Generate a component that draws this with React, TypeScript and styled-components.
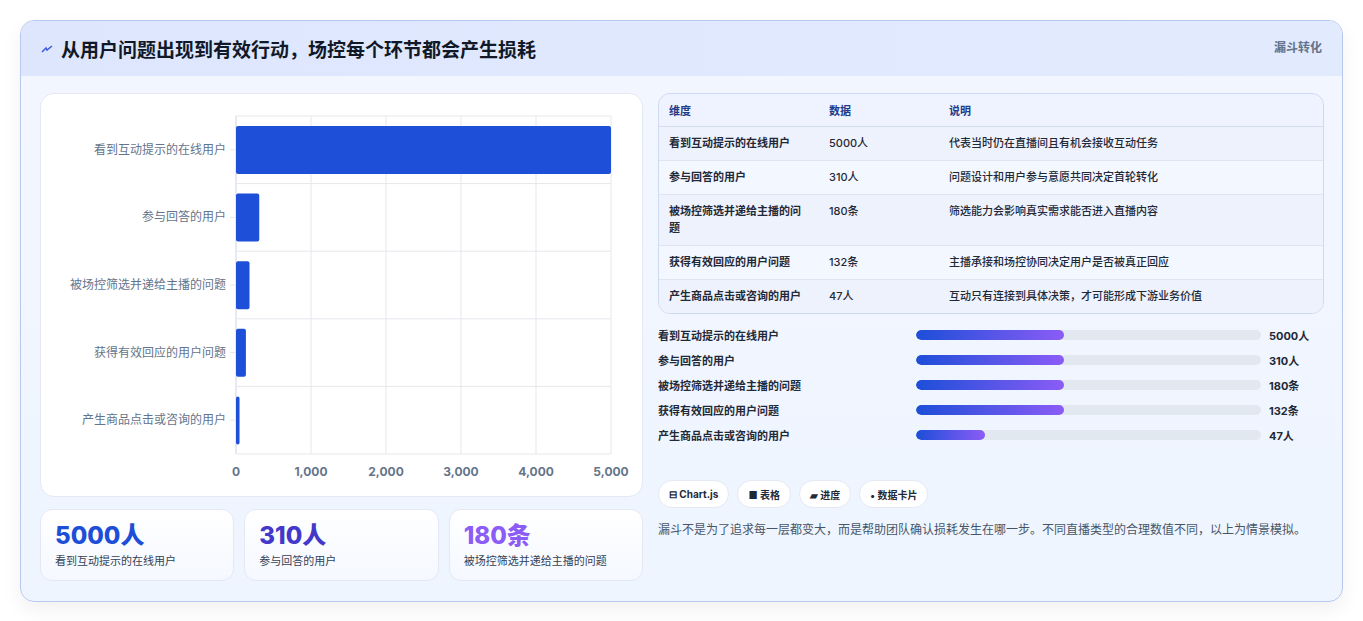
import React from 'react';
import styled, { createGlobalStyle } from 'styled-components';

const Global = createGlobalStyle`
  body { margin: 0; background: #fff; font-family: Inter, "Noto Sans CJK SC", sans-serif; }
`;

const rows = [
  { name: '看到互动提示的在线用户', v: 5000, unit: '人', note: '代表当时仍在直播间且有机会接收互动任务', pct: 43 },
  { name: '参与回答的用户', v: 310, unit: '人', note: '问题设计和用户参与意愿共同决定首轮转化', pct: 43 },
  { name: '被场控筛选并递给主播的问题', v: 180, unit: '条', note: '筛选能力会影响真实需求能否进入直播内容', pct: 43 },
  { name: '获得有效回应的用户问题', v: 132, unit: '条', note: '主播承接和场控协同决定用户是否被真正回应', pct: 43 },
  { name: '产生商品点击或咨询的用户', v: 47, unit: '人', note: '互动只有连接到具体决策，才可能形成下游业务价值', pct: 20 },
];

const Page = styled.div`
  padding: 20px 20px 20px 20px;
  height: 621px;
  box-sizing: border-box;
`;
const Card = styled.div`
  border: 1px solid #b9c8ee;
  border-radius: 14px;
  background: linear-gradient(180deg, #f3f6ff, #eef5ff);
  box-shadow: 0 8px 20px rgba(0,0,0,0.06);
  overflow: hidden;
  height: 580px;
`;
const Header = styled.div`
  height: 55px;
  background: linear-gradient(90deg, #dde6fd, #e2ebfe);
  display: flex;
  align-items: center;
  justify-content: space-between;
  padding: 0 20px;
`;
const Title = styled.h1`
  margin: 0;
  font-size: 19px;
  font-weight: 700;
  color: #111827;
  display: flex;
  align-items: center;
  gap: 8px;
`;
const Tag = styled.span`
  font-size: 12px;
  font-weight: 700;
  color: #64748b;
  align-self: flex-start;
  margin-top: 17px;
`;
const Body = styled.div`
  display: grid;
  grid-template-columns: 603px 666px;
  gap: 15px;
  padding: 17px 19px 0 19px;
`;
const Col = styled.div`
  display: flex;
  flex-direction: column;
`;
const Panel = styled.div`
  background: #fff;
  border: 1px solid #e3e8f2;
  border-radius: 14px;
  height: 402px;
  position: relative;
`;
const Stats = styled.div`
  display: grid;
  grid-template-columns: 1fr 1fr 1fr;
  gap: 10px;
  margin-top: 12px;
`;
const Stat = styled.div`
  background: linear-gradient(180deg, #fff, #f5f8ff);
  border: 1px solid #e3e8f2;
  border-radius: 12px;
  height: 72px;
  padding: 10px 14px;
  box-sizing: border-box;
`;
const StatNum = styled.div<{ $c: string }>`
  font-size: 24px;
  font-weight: 800;
  color: ${p => p.$c};
  line-height: 32px;
`;
const StatLbl = styled.div`
  font-size: 11px;
  color: #334155;
`;
const Table = styled.table`
  width: 100%;
  border-collapse: collapse;
  font-size: 11px;
  color: #1f2937;
`;
const TableWrap = styled.div`
  border: 1px solid #cfdaf0;
  border-radius: 12px;
  overflow: hidden;
  background: #eef3ff;
`;
const Th = styled.th`
  text-align: left;
  font-weight: 700;
  color: #1e3a8a;
  padding: 0 10px;
  height: 32px;
  border-bottom: 1px solid #d4ddef;
`;
const Tr = styled.tr<{ $odd: boolean }>`
  background: ${p => (p.$odd ? '#f3f7ff' : '#eef2fd')};
  & td { border-bottom: 1px solid #dde4f2; }
  &:last-child td { border-bottom: none; }
`;
const Td = styled.td<{ $b?: boolean }>`
  padding: 8px 10px;
  font-weight: ${p => (p.$b ? 700 : 500)};
  line-height: 17px;
  vertical-align: top;
`;
const Bars = styled.div`
  display: flex;
  flex-direction: column;
  gap: 8px;
  margin-top: 12px;
`;
const BarRow = styled.div`
  display: grid;
  grid-template-columns: 250px 345px 60px;
  align-items: center;
  gap: 8px;
  height: 17px;
  font-size: 11px;
  font-weight: 700;
  color: #1f2937;
`;
const Track = styled.div`
  height: 10px;
  border-radius: 5px;
  background: #e2e8f0;
  overflow: hidden;
`;
const Fill = styled.div`
  height: 100%;
  border-radius: 5px;
  background: linear-gradient(90deg, #1d4ed8, #8b5cf6);
`;
const Chips = styled.div`
  display: flex;
  gap: 8px;
  margin-top: 37px;
`;
const Chip = styled.span`
  background: #fff;
  border: 1px solid #e5e9f2;
  border-radius: 14px;
  height: 26px;
  padding: 0 10px;
  display: flex;
  align-items: center;
  font-size: 10px;
  font-weight: 700;
  color: #1f2937;
`;
const Note = styled.p`
  margin: 12px 0 0;
  font-size: 12px;
  line-height: 20px;
  color: #475569;
`;

const Chart = () => {
  const x0 = 195, x1 = 570, y0 = 22, rowH = 67.6;
  const ticks = [0, 1000, 2000, 3000, 4000, 5000];
  return (
    <svg width="601" height="400" style={{ display: 'block' }}>
      {ticks.map((t, i) => {
        const x = x0 + (x1 - x0) * (t / 5000);
        return (
          <g key={t}>
            <line x1={x} x2={x} y1={y0} y2={y0 + rowH * 5} stroke={i === 0 ? '#cbd5e1' : '#e5e7eb'} />
            <text x={x} y={y0 + rowH * 5 + 22} textAnchor="middle" fontSize="12" fontWeight="700" fill="#64748b" fontFamily="Inter, sans-serif">{t.toLocaleString('en-US')}</text>
          </g>
        );
      })}
      {rows.map((r, i) => {
        const y = y0 + rowH * i;
        const w = Math.max(3, (x1 - x0) * (r.v / 5000));
        return (
          <g key={r.name}>
            <line x1={x0} x2={x1} y1={y + rowH} y2={y + rowH} stroke="#e5e7eb" />
            <line x1={x0 - 6} x2={x0} y1={y + rowH / 2} y2={y + rowH / 2} stroke="#e5e7eb" />
            <rect x={x0} y={y + 10} width={w} height={48} rx="2" fill="#1d4fd8" />
            <text x={x0 - 10} y={y + rowH / 2 + 4} textAnchor="end" fontSize="12" fill="#64748b" fontFamily='"Noto Sans CJK SC", sans-serif'>{r.name}</text>
          </g>
        );
      })}
      <line x1={x0} x2={x1} y1={y0} y2={y0} stroke="#e5e7eb" />
    </svg>
  );
};

export default function App() {
  return (
    <Page>
      <Global />
      <Card>
        <Header>
          <Title>
            <svg width="12" height="12" viewBox="0 0 12 12"><path d="M1 9 L5 5 L6 7 L11 3" stroke="#3b5bdb" strokeWidth="1.5" fill="none" /></svg>
            从用户问题出现到有效行动，场控每个环节都会产生损耗
          </Title>
          <Tag>漏斗转化</Tag>
        </Header>
        <Body>
          <Col>
            <Panel><Chart /></Panel>
            <Stats>
              <Stat><StatNum $c="#1d4ed8">5000人</StatNum><StatLbl>看到互动提示的在线用户</StatLbl></Stat>
              <Stat><StatNum $c="#4338ca">310人</StatNum><StatLbl>参与回答的用户</StatLbl></Stat>
              <Stat><StatNum $c="#8b5cf6">180条</StatNum><StatLbl>被场控筛选并递给主播的问题</StatLbl></Stat>
            </Stats>
          </Col>
          <Col>
            <TableWrap>
              <Table>
                <colgroup><col style={{ width: 160 }} /><col style={{ width: 120 }} /><col /></colgroup>
                <thead><tr><Th>维度</Th><Th>数据</Th><Th>说明</Th></tr></thead>
                <tbody>
                  {rows.map((r, i) => (
                    <Tr key={r.name} $odd={i % 2 === 1}>
                      <Td $b>{r.name}</Td>
                      <Td>{r.v}{r.unit}</Td>
                      <Td>{r.note}</Td>
                    </Tr>
                  ))}
                </tbody>
              </Table>
            </TableWrap>
            <Bars>
              {rows.map(r => (
                <BarRow key={r.name}>
                  <span>{r.name}</span>
                  <Track><Fill style={{ width: `${r.pct}%` }} /></Track>
                  <span>{r.v}{r.unit}</span>
                </BarRow>
              ))}
            </Bars>
            <Chips>
              <Chip>⊟ Chart.js</Chip>
              <Chip>■ 表格</Chip>
              <Chip>▰ 进度</Chip>
              <Chip>• 数据卡片</Chip>
            </Chips>
            <Note>漏斗不是为了追求每一层都变大，而是帮助团队确认损耗发生在哪一步。不同直播类型的合理数值不同，以上为情景模拟。</Note>
          </Col>
        </Body>
      </Card>
    </Page>
  );
}
